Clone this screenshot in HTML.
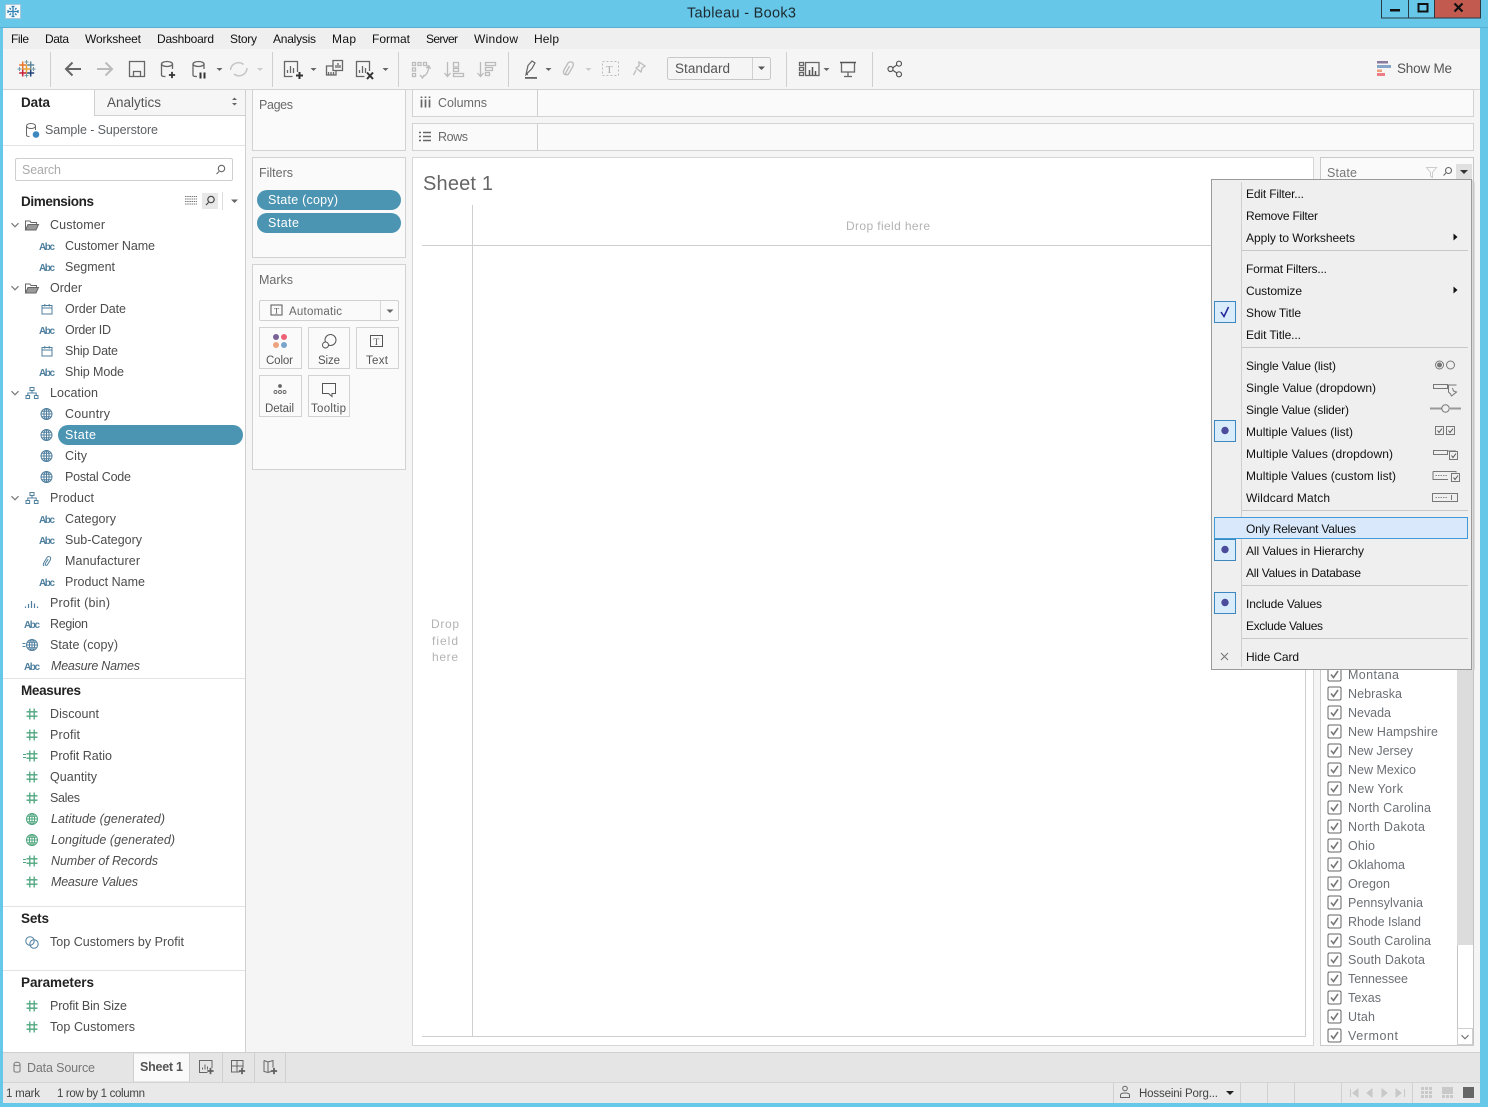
<!DOCTYPE html>
<html lang="en"><head><meta charset="utf-8"><title>Tableau - Book3</title>
<style>
html,body{margin:0;padding:0;width:1488px;height:1107px;overflow:hidden;background:#66c7e9}
svg{display:block}
text{font-family:"Liberation Sans",sans-serif;font-size:12.5px;fill:#4a4a4a;white-space:pre}
.m{font-size:12px;fill:#111}
.f{font-size:12.5px;fill:#4c4c4c}
.i{font-style:italic}
.h{font-weight:bold;font-size:13.5px;fill:#222}
.c{font-size:12.5px;fill:#6a6a6a}
.s{font-size:12.5px;fill:#6b7075}
.a{font-size:10px;fill:#4f7f9e;font-weight:bold}
.b{fill:#fafafa;stroke:#d2d2d2}
.w{fill:none;stroke:#666;stroke-width:1.3}
.lg{fill:none;stroke:#bbb;stroke-width:1.3}
.ln{stroke:#cfcfcf;stroke-width:1}
</style></head><body>
<svg width="1488" height="1107" viewBox="0 0 1488 1107" xmlns="http://www.w3.org/2000/svg">
<defs>
<symbol id="globe" viewBox="0 0 14 14" width="14" height="14"><g fill="none" stroke="currentColor" stroke-width="1"><circle cx="7" cy="7" r="5.5"/><ellipse cx="7" cy="7" rx="2.6" ry="5.5"/><path d="M7 1.5v11M1.5 7h11M2.3 4.3h9.4M2.3 9.7h9.4"/></g></symbol>
<symbol id="hash" viewBox="0 0 14 14" width="14" height="14"><path d="M4.8 1.500v11M9.200 1.500v11M1.500 4.800h11M1.500 9.200h11" fill="none" stroke="currentColor" stroke-width="1.300"/></symbol>
<symbol id="cal" viewBox="0 0 14 14" width="14" height="14"><path d="M2 3.500h10v8.500H2zM2 6h10M4.800 2v2.500M9.200 2v2.500" fill="none" stroke="#4f7f9e" stroke-width="1"/></symbol>
<symbol id="fold" viewBox="0 0 16 14" width="16" height="14"><path d="M1.500 12V3h4.500l1 1.500h5.500v2" fill="none" stroke="#666" stroke-width="1"/><path d="M1.500 12l2.500-5.500h10.500L12 12z" fill="#999" stroke="#666" stroke-width="1"/></symbol>
<symbol id="hier" viewBox="0 0 14 14" width="14" height="14"><path d="M5 1.500h4v3H5zM1 9.500h3.600v3H1zM9.400 9.500H13v3H9.400zM7 4.500v2.500M2.800 9.500V7h8.400v2.500" fill="none" stroke="#4f7f9e" stroke-width="1"/></symbol>
<symbol id="chev" viewBox="0 0 10 10" width="10" height="10"><path d="M1.500 3.200L5 6.800l3.500-3.600" fill="none" stroke="#777" stroke-width="1.200"/></symbol>
<symbol id="cb" viewBox="0 0 15 15" width="15" height="15"><rect x="1" y="1" width="13" height="13" rx="1.500" fill="#fff" stroke="#666"/><path d="M4 7.500l2.500 3L11 4" fill="none" stroke="#777" stroke-width="1.600"/></symbol>
<symbol id="dot" viewBox="0 0 24 24" width="24" height="24"><rect x="1.500" y="1.500" width="21" height="21" fill="#d9ecfb" stroke="#3f88bf"/><circle cx="12" cy="11.500" r="3.700" fill="#4c4c9c"/></symbol>
<symbol id="plus" viewBox="0 0 9 9" width="9" height="9"><path d="M4.500 1v7M1 4.500h7" stroke="#333" stroke-width="2" fill="none"/></symbol>
</defs>

<!-- window frame -->
<rect width="1488" height="1107" fill="#66c7e9"/>
<rect x="0" y="27" width="1488" height="1" fill="#5ab0d0"/>
<rect x="3" y="28" width="1477" height="1075" fill="#f5f5f5"/>
<rect x="5.500" y="4.500" width="15" height="14" fill="#f4f9fc" stroke="#a8c8d8"/>
<g fill="none" stroke="#2f7fb0" stroke-width="1.300"><path d="M13 6.500v10M8 11.500h10M9.500 8l1.500 1.500M16.500 8L15 9.500M9.500 15l1.500-1.500M16.500 15L15 13.500M8 8h0M11.500 6.500h3M11.500 16.500h3M8 10v3M18 10v3"/></g>
<text x="687" y="17.500" style="font-size:14.500px;fill:#1c2a30" textLength="109">Tableau - Book3</text>
<g>
<rect x="1381.500" y="-1" width="27" height="19" fill="#66c7e9" stroke="#2b3a42"/>
<rect x="1408.500" y="-1" width="26" height="19" fill="#66c7e9" stroke="#2b3a42"/>
<rect x="1434.500" y="-1" width="46" height="19" fill="#c25a50" stroke="#2b3a42"/>
<rect x="1390" y="9" width="10" height="2.500" fill="#111"/>
<rect x="1418.500" y="4" width="9" height="7.500" fill="none" stroke="#111" stroke-width="2"/>
<path d="M1454.500 3.500l8 8M1462.500 3.500l-8 8" stroke="#111" stroke-width="2.200"/>
</g>

<!-- menu -->
<rect x="3" y="28" width="1477" height="21" fill="#efefef"/>
<text class="m" x="11" y="43" textLength="18">File</text>
<text class="m" x="45" y="43" textLength="24">Data</text>
<text class="m" x="85" y="43" textLength="56">Worksheet</text>
<text class="m" x="157" y="43" textLength="57">Dashboard</text>
<text class="m" x="230" y="43" textLength="27">Story</text>
<text class="m" x="273" y="43" textLength="43">Analysis</text>
<text class="m" x="332" y="43" textLength="24">Map</text>
<text class="m" x="372" y="43" textLength="38">Format</text>
<text class="m" x="426" y="43" textLength="32">Server</text>
<text class="m" x="474" y="43" textLength="44">Window</text>
<text class="m" x="534" y="43" textLength="25">Help</text>

<!-- toolbar -->
<g class="ln"><path d="M50.500 52v35M272.500 52v35M398.500 52v35M508.500 52v35M786.500 52v35M872.500 52v35"/></g>
<g fill="none">
<path d="M26.500 64.500v9M22 69h9" stroke="#e8a33d" stroke-width="1.500"/>
<path d="M22.700 61.500v7M19.200 65h7" stroke="#e8762d" stroke-width="1.500"/>
<path d="M30.700 61.500v7M27.200 65h7" stroke="#5b879b" stroke-width="1.500"/>
<path d="M22.700 69.500v7M19.200 73h7" stroke="#c72037" stroke-width="1.500"/>
<path d="M30.700 69.500v7M27.200 73h7" stroke="#1f447a" stroke-width="1.500"/>
<path d="M26.500 60v4M24.500 62h4M26.500 73.500v4M24.500 75.500h4M19.500 67v4M17.500 69h4M33.500 67v4M31.500 69h4" stroke="#7099a6" stroke-width="1"/>
</g>
<path d="M81 69H66M72.500 62.500L66 69l6.500 6.500" fill="none" stroke="#666" stroke-width="2"/>
<path d="M97 69h15M105.500 62.500L112 69l-6.500 6.500" fill="none" stroke="#bbb" stroke-width="2"/>
<path class="w" d="M129.500 61.500h15v15h-15zM133.500 76.500v-5h7v5"/>
<g class="w"><ellipse cx="167" cy="64" rx="5.500" ry="2.500"/><path d="M161.500 64v11c0 1 1.500 1.500 3 1.500h1M172.500 64v5"/></g>
<use href="#plus" x="168" y="71" width="8" height="8"/>
<g class="w"><ellipse cx="198.500" cy="64" rx="5.500" ry="2.500"/><path d="M193 64v11c0 1 1.500 1.500 3 1.500h1M204 64v5"/></g>
<path d="M200.500 72.500v6M204.500 72.500v6" stroke="#333" stroke-width="2"/>
<path d="M216.500 68l3 3 3-3z" fill="#666"/>
<path d="M230.500 70a8 8 0 0 1 13-5.500M247 68a8 8 0 0 1-13 6" fill="none" stroke="#c5c5c5" stroke-width="1.500"/>
<path d="M257 68l3 3 3-3z" fill="#ccc"/>
<path class="w" d="M297.500 72v-10.500h-13v15h8M287.500 73v-3M290.500 73v-7M293.500 73v-5"/>
<use href="#plus" x="295" y="71" width="9" height="9"/>
<path d="M310.500 68l3 3 3-3z" fill="#666"/>
<path class="w" d="M333 66h-6.500v9h9.500v-4M328.500 75v-3M331 75v-3M333.500 75v-3M333 60.500h9.500v10H333zM336 68v-3M338 68v-5M340 68v-3"/>
<path class="w" d="M369.500 71v-9.500h-13v15h8M359.500 73v-3M362.500 73v-7M365.500 73v-5"/>
<path d="M367 72.500l6 6.500M373 72.500l-6 6.500" stroke="#333" stroke-width="2"/>
<path d="M382.500 68l3 3 3-3z" fill="#666"/>
<path class="lg" d="M412.500 62.500h3v3h-3zM418 62.500h3v3h-3zM423.500 62.500h3v3h-3zM412.500 68h3v3h-3zM412.500 73.500h3v3h-3zM428 65c1.500 5-1 10-5.500 12M420 75l2.500 3 1.500-3M426 68l3-2 1.500 3"/>
<path class="lg" d="M447.500 62v14M444.500 73l3 3.500 3-3.500M453.500 62.500h5v4.500h-5zM453.500 68.500h5v3h-5zM453.500 73.500h10v3h-10z"/>
<path class="lg" d="M480.500 62v14M477.500 73l3 3.500 3-3.500M485.500 62.500h10v3h-10zM485.500 67.500h7v3h-7zM485.500 72.500h4v3h-4z"/>
<path d="M526 74.500l2-9 4-4.500 3 2-3 5.500zM526 74.500h2" fill="none" stroke="#666" stroke-width="1.200"/>
<rect x="525" y="77" width="12" height="1.800" fill="#666"/>
<path d="M545.500 68l3 3 3-3z" fill="#666"/>
<path class="lg" d="M566 75c-3-1-3-3-2-5l4-7c1.500-2 4-1 5 0 1 2 0 3-1 5l-3.500 6c-1 1-2 1-2.500 0-.5-.5 0-2 .5-2.500l3-5.500"/>
<path d="M585.500 68l3 3 3-3z" fill="#ccc"/>
<rect x="602.500" y="61.500" width="16" height="14" fill="none" stroke="#bbb" stroke-dasharray="2 2"/>
<text x="606" y="73" style="font-size:11px;fill:#aaa;font-family:'Liberation Serif',serif">T</text>
<path class="lg" d="M639 62l6 4-3 2-1 4-5-4 3-2zM636 70l-2.500 5"/>
<rect x="667.500" y="57.500" width="103" height="22" rx="2" fill="#f5f5f5" stroke="#c8c8c8"/>
<path d="M752.500 58v21" stroke="#d0d0d0"/>
<text x="675" y="73" style="font-size:13.500px;fill:#555" textLength="55">Standard</text>
<path d="M758 66.500l3.500 3.500 3.500-3.500z" fill="#555"/>
<path class="w" d="M799.500 62.500h4v3h-4zM799.500 67.500h4v3h-4zM799.500 72.500h4v3h-4zM805.500 62.500h13.500v13h-13.500z" stroke-width="1"/>
<path d="M809.500 75v-5M812.500 75v-8M815.500 75v-4" stroke="#555" stroke-width="1.500"/>
<path d="M823.500 68l3 3 3-3z" fill="#666"/>
<path d="M840 62.500h16" stroke="#555" stroke-width="1.500"/><path class="w" d="M841.500 63v9h13v-9M848 72v4.500M844 76.500h8"/>
<g fill="none" stroke="#555" stroke-width="1.200"><circle cx="890.500" cy="69" r="2.500"/><circle cx="899" cy="63.700" r="2.500"/><circle cx="899" cy="74.300" r="2.500"/><path d="M892.700 67.700l4-2.600M892.700 70.300l4 2.600"/></g>
<g fill="none"><rect x="1377" y="61" width="11" height="2.500" fill="#8a7a9f"/><rect x="1377" y="65" width="14" height="3" fill="#85a6c8"/><rect x="1377" y="69.500" width="5" height="2.500" fill="#eaa07e"/><rect x="1377" y="73" width="8" height="3" fill="#ec7d85"/></g>
<text x="1397" y="73" style="font-size:13.500px;fill:#555" textLength="55">Show Me</text>

<!-- data pane -->
<rect x="3" y="89.500" width="242" height="963" fill="#fff"/>
<path d="M245.500 89v964" stroke="#d0d0d0"/>
<rect x="94.500" y="89.500" width="151" height="26" fill="#f6f6f6" stroke="#d0d0d0"/>
<rect x="3" y="89" width="1477" height="1" fill="#d6d6d6"/>
<text x="21" y="107" style="font-size:13.500px;font-weight:bold;fill:#222" textLength="29">Data</text>
<text x="107" y="107" style="font-size:13.500px;fill:#555" textLength="54">Analytics</text>
<path d="M232 100l2.500-2.500 2.500 2.500zM232 103l2.500 2.500 2.500-2.500z" fill="#666"/>
<g class="w" style="stroke-width:1"><ellipse cx="31" cy="126" rx="4.500" ry="2.500"/><path d="M26.500 126v9c0 1 1 1.500 3 1.500M35.500 126v4"/></g>
<circle cx="36" cy="134.500" r="3.300" fill="#3f88bf"/>
<text x="45" y="134" class="s" style="font-size:12.500px;fill:#5d6266" textLength="113">Sample - Superstore</text>
<path d="M3 145.500h242" stroke="#e3e3e3"/>
<rect x="15.500" y="158.500" width="217" height="22" rx="1.500" fill="#fff" stroke="#cfcfcf"/>
<text x="22" y="174" style="font-size:12.500px;fill:#aaa" textLength="39">Search</text>
<g class="w" style="stroke-width:1.100"><circle cx="221.500" cy="168.500" r="3.200"/><path d="M219 171.500l-2.500 2.500"/></g>
<text class="h" x="21" y="206" textLength="73">Dimensions</text>
<path d="M185 196.500h12M185 199h12M185 201.500h12M185 204h12" stroke="#777" stroke-dasharray="1.500 .7"/>
<rect x="202" y="193" width="16" height="16" fill="#e8e8e8"/>
<g fill="none" stroke="#444" stroke-width="1.200"><circle cx="211" cy="199.500" r="3.200"/><path d="M208.500 202.500l-2.500 2.500"/></g>
<path d="M222.500 192v18" stroke="#ddd"/>
<path d="M231 199.500h7l-3.500 3.500z" fill="#666"/>

<!-- dimensions -->
<use href="#chev" x="10" y="220"/><use href="#fold" x="24" y="218"/><text class="f" x="50" y="229" textLength="55">Customer</text>
<text class="a" x="39" y="250" textLength="16">Abc</text><text class="f" x="65" y="250" textLength="90">Customer Name</text>
<text class="a" x="39" y="271" textLength="16">Abc</text><text class="f" x="65" y="271" textLength="50">Segment</text>
<use href="#chev" x="10" y="283"/><use href="#fold" x="24" y="281"/><text class="f" x="50" y="292" textLength="32">Order</text>
<use href="#cal" x="40" y="302"/><text class="f" x="65" y="313" textLength="61">Order Date</text>
<text class="a" x="39" y="334" textLength="16">Abc</text><text class="f" x="65" y="334" textLength="46">Order ID</text>
<use href="#cal" x="40" y="344"/><text class="f" x="65" y="355" textLength="53">Ship Date</text>
<text class="a" x="39" y="376" textLength="16">Abc</text><text class="f" x="65" y="376" textLength="59">Ship Mode</text>
<use href="#chev" x="10" y="388"/><use href="#hier" x="25" y="386"/><text class="f" x="50" y="397" textLength="48">Location</text>
<use href="#globe" x="39.500" y="407" style="color:#4f7f9e"/><text class="f" x="65" y="418" textLength="45">Country</text>
<rect x="58" y="425" width="185" height="20" rx="10" fill="#4b94b2"/>
<use href="#globe" x="39.500" y="428" style="color:#4f7f9e"/><text class="f" x="65" y="439" style="fill:#fff" textLength="31">State</text>
<use href="#globe" x="39.500" y="449" style="color:#4f7f9e"/><text class="f" x="65" y="460" textLength="22">City</text>
<use href="#globe" x="39.500" y="470" style="color:#4f7f9e"/><text class="f" x="65" y="481" textLength="66">Postal Code</text>
<use href="#chev" x="10" y="493"/><use href="#hier" x="25" y="491"/><text class="f" x="50" y="502" textLength="44">Product</text>
<text class="a" x="39" y="523" textLength="16">Abc</text><text class="f" x="65" y="523" textLength="51">Category</text>
<text class="a" x="39" y="544" textLength="16">Abc</text><text class="f" x="65" y="544" textLength="77">Sub-Category</text>
<path d="M44 566c-1-1-1-2 0-3.500l3-5c1-1.500 3-1 3.500 0s0 2-.5 3l-2.500 4c-.5 1-1.500 1-2 .5s-.2-1.500.2-2l2.500-3.800" fill="none" stroke="#4f7f9e"/>
<text class="f" x="65" y="565" textLength="75">Manufacturer</text>
<text class="a" x="39" y="586" textLength="16">Abc</text><text class="f" x="65" y="586" textLength="80">Product Name</text>
<path d="M25.500 608v-1.500M28.500 608v-4M31.500 608v-7M34.500 608v-4.500M37.500 608v-1.500" stroke="#4f7f9e" stroke-width="1.200"/><text class="f" x="50" y="607" textLength="60">Profit (bin)</text>
<text class="a" x="24" y="628" textLength="16">Abc</text><text class="f" x="50" y="628" textLength="38">Region</text>
<path d="M22.500 643.500h3M22.500 646.500h3" stroke="#4f7f9e"/><use href="#globe" x="25" y="638" style="color:#4f7f9e"/><text class="f" x="50" y="649" textLength="68">State (copy)</text>
<text class="a" x="24" y="670" textLength="16">Abc</text><text class="f i" x="51" y="670" textLength="89">Measure Names</text>
<path d="M3 678.500h242" stroke="#e3e3e3"/>

<!-- measures -->
<text class="h" x="21" y="695" textLength="60">Measures</text>
<use href="#hash" x="25" y="707" style="color:#4fa67f"/><text class="f" x="50" y="718" textLength="49">Discount</text>
<use href="#hash" x="25" y="728" style="color:#4fa67f"/><text class="f" x="50" y="739" textLength="30">Profit</text>
<path d="M23 754.500h3M23 757.500h3" stroke="#4fa67f"/><use href="#hash" x="25" y="749" style="color:#4fa67f"/><text class="f" x="50" y="760" textLength="62">Profit Ratio</text>
<use href="#hash" x="25" y="770" style="color:#4fa67f"/><text class="f" x="50" y="781" textLength="47">Quantity</text>
<use href="#hash" x="25" y="791" style="color:#4fa67f"/><text class="f" x="50" y="802" textLength="30">Sales</text>
<use href="#globe" x="25" y="812" style="color:#4fa67f"/><text class="f i" x="51" y="823" textLength="114">Latitude (generated)</text>
<use href="#globe" x="25" y="833" style="color:#4fa67f"/><text class="f i" x="51" y="844" textLength="124">Longitude (generated)</text>
<path d="M23 859.500h3M23 862.500h3" stroke="#4fa67f"/><use href="#hash" x="25" y="854" style="color:#4fa67f"/><text class="f i" x="51" y="865" textLength="107">Number of Records</text>
<use href="#hash" x="25" y="875" style="color:#4fa67f"/><text class="f i" x="51" y="886" textLength="87">Measure Values</text>
<path d="M3 906.500h242" stroke="#e3e3e3"/>
<text class="h" x="21" y="923" textLength="28">Sets</text>
<g fill="none" stroke="#4f7f9e"><circle cx="30" cy="941" r="4.200"/><circle cx="34" cy="944" r="4.200"/></g>
<text class="f" x="50" y="946" textLength="134">Top Customers by Profit</text>
<path d="M3 970.500h242" stroke="#e3e3e3"/>
<text class="h" x="21" y="987" textLength="73">Parameters</text>
<use href="#hash" x="25" y="999" style="color:#4fa67f"/><text class="f" x="50" y="1010" textLength="77">Profit Bin Size</text>
<use href="#hash" x="25" y="1020" style="color:#4fa67f"/><text class="f" x="50" y="1031" textLength="85">Top Customers</text>

<!-- shelves cards -->
<rect class="b" x="252.500" y="89.500" width="153" height="61"/>
<text class="c" x="259" y="109" textLength="34">Pages</text>
<rect class="b" x="252.500" y="157.500" width="153" height="100"/>
<text class="c" x="259" y="177" textLength="34">Filters</text>
<rect x="257" y="190" width="144" height="20" rx="10" fill="#4b94b2"/>
<text x="268" y="204" style="fill:#fff" textLength="70">State (copy)</text>
<rect x="257" y="213" width="144" height="20" rx="10" fill="#4b94b2"/>
<text x="268" y="227" style="fill:#fff" textLength="31">State</text>
<rect class="b" x="252.500" y="264.500" width="153" height="205"/>
<text class="c" x="259" y="284" textLength="34">Marks</text>
<rect x="259.500" y="300.500" width="139" height="20" rx="1.500" fill="#fafafa" stroke="#d0d0d0"/>
<path d="M380.500 301v19" stroke="#d8d8d8"/>
<rect x="271" y="305" width="11" height="10" fill="none" stroke="#555"/>
<text x="274" y="313.500" style="font-size:8.500px;fill:#555;font-family:'Liberation Serif',serif">T</text>
<text x="289" y="315" style="font-size:11.500px;fill:#666" textLength="53">Automatic</text>
<path d="M386.500 309.500h7l-3.500 3.500z" fill="#666"/>
<g fill="#fafafa" stroke="#d2d2d2"><rect x="259.500" y="327.500" width="42" height="41"/><rect x="308.500" y="327.500" width="41" height="41"/><rect x="356.500" y="327.500" width="42" height="41"/><rect x="259.500" y="375.500" width="42" height="41"/><rect x="308.500" y="375.500" width="41" height="41"/></g>
<circle cx="276" cy="337" r="3" fill="#7a6296"/><circle cx="284" cy="337" r="3" fill="#ee6277"/><circle cx="276" cy="345" r="3" fill="#eda47e"/><circle cx="284" cy="345" r="3" fill="#7aa4cc"/>
<text x="266" y="364" style="font-size:11.500px;fill:#555" textLength="27">Color</text>
<g fill="none" stroke="#555"><circle cx="330.500" cy="340" r="5.500"/><circle cx="325.500" cy="345" r="3" fill="#fafafa"/></g>
<text x="318" y="364" style="font-size:11.500px;fill:#555" textLength="22">Size</text>
<rect x="370.500" y="335.500" width="12" height="11" fill="none" stroke="#555"/>
<text x="373.500" y="345" style="font-size:9.500px;fill:#555;font-family:'Liberation Serif',serif">T</text>
<text x="366" y="364" style="font-size:11.500px;fill:#555" textLength="22">Text</text>
<circle cx="280" cy="386" r="1.900" fill="#666"/><g fill="none" stroke="#666" stroke-width=".9"><circle cx="275.500" cy="392" r="1.500"/><circle cx="280" cy="392" r="1.500"/><circle cx="284.500" cy="392" r="1.500"/></g>
<text x="265" y="412" style="font-size:11.500px;fill:#555" textLength="29">Detail</text>
<path d="M322.500 383.500h13v10h-3.500v3l-3.500-3h-6z" fill="none" stroke="#555"/>
<text x="311" y="412" style="font-size:11.500px;fill:#555" textLength="35">Tooltip</text>

<rect class="b" x="412.500" y="89.500" width="1061" height="27"/>
<path class="ln" d="M537.500 90v26"/>
<path d="M421.500 99.500v8M425.500 99.500v8M429.500 99.500v8M421.500 96.500v1.500M425.500 96.500v1.500M429.500 96.500v1.500" stroke="#666" stroke-width="1.700"/>
<text class="c" x="438" y="107" textLength="49">Columns</text>
<rect class="b" x="412.500" y="123.500" width="1061" height="27"/>
<path class="ln" d="M537.500 124v26"/>
<path d="M419 132.500h2M423 132.500h8M419 136.500h2M423 136.500h8M419 140.500h2M423 140.500h8" stroke="#666" stroke-width="1.500"/>
<text class="c" x="438" y="141" textLength="30">Rows</text>

<!-- view -->
<rect x="412.500" y="157.500" width="901" height="888" fill="#fff" stroke="#d6d6d6"/>
<text x="423" y="190" style="font-size:20px;fill:#666" textLength="70">Sheet 1</text>
<path d="M472.500 205v831M422 245.500h883M422 1036.500h883.500M1305.500 245v792" stroke="#cfcfcf"/>
<text x="846" y="230" style="font-size:12px;fill:#b3b3b3" textLength="84">Drop field here</text>
<text x="431" y="628" style="font-size:12px;fill:#b3b3b3" textLength="28">Drop</text>
<text x="432" y="645" style="font-size:12px;fill:#b3b3b3" textLength="26">field</text>
<text x="432" y="661" style="font-size:12px;fill:#b3b3b3" textLength="26">here</text>

<!-- filter card -->
<rect x="1320.500" y="157.500" width="153" height="888" fill="#fff" stroke="#cacaca"/>
<rect x="1321" y="158" width="152" height="22" fill="#fafafa"/>
<text x="1327" y="177" style="font-size:12.500px;fill:#777" textLength="30">State</text>
<path d="M1426.500 167.500h10l-4 5v5l-2-1.500v-3.500z" fill="none" stroke="#ccc"/>
<g fill="none" stroke="#666" stroke-width="1.100"><circle cx="1448.500" cy="170.500" r="3"/><path d="M1446 173l-2.500 2.500"/></g>
<rect x="1456" y="164" width="16" height="16" fill="#e0e0e0"/>
<path d="M1460 170h8l-4 4z" fill="#333"/>
<rect x="1457" y="180" width="16" height="765" fill="#dcdcdc"/>
<rect x="1457.500" y="1028.500" width="15" height="16" fill="#fff" stroke="#cfcfcf"/>
<use href="#chev" x="1460" y="1032"/>
<path d="M1473.500 158v887M1457.500 945v84" stroke="#c4c4c4"/>
<g>
<use href="#cb" x="1327" y="667"/><text class="s" x="1348" y="679" textLength="51">Montana</text>
<use href="#cb" x="1327" y="686"/><text class="s" x="1348" y="698" textLength="54">Nebraska</text>
<use href="#cb" x="1327" y="705"/><text class="s" x="1348" y="717" textLength="43">Nevada</text>
<use href="#cb" x="1327" y="724"/><text class="s" x="1348" y="736" textLength="90">New Hampshire</text>
<use href="#cb" x="1327" y="743"/><text class="s" x="1348" y="755" textLength="65">New Jersey</text>
<use href="#cb" x="1327" y="762"/><text class="s" x="1348" y="774" textLength="68">New Mexico</text>
<use href="#cb" x="1327" y="781"/><text class="s" x="1348" y="793" textLength="55">New York</text>
<use href="#cb" x="1327" y="800"/><text class="s" x="1348" y="812" textLength="83">North Carolina</text>
<use href="#cb" x="1327" y="819"/><text class="s" x="1348" y="831" textLength="77">North Dakota</text>
<use href="#cb" x="1327" y="838"/><text class="s" x="1348" y="850" textLength="27">Ohio</text>
<use href="#cb" x="1327" y="857"/><text class="s" x="1348" y="869" textLength="57">Oklahoma</text>
<use href="#cb" x="1327" y="876"/><text class="s" x="1348" y="888" textLength="42">Oregon</text>
<use href="#cb" x="1327" y="895"/><text class="s" x="1348" y="907" textLength="75">Pennsylvania</text>
<use href="#cb" x="1327" y="914"/><text class="s" x="1348" y="926" textLength="73">Rhode Island</text>
<use href="#cb" x="1327" y="933"/><text class="s" x="1348" y="945" textLength="83">South Carolina</text>
<use href="#cb" x="1327" y="952"/><text class="s" x="1348" y="964" textLength="77">South Dakota</text>
<use href="#cb" x="1327" y="971"/><text class="s" x="1348" y="983" textLength="60">Tennessee</text>
<use href="#cb" x="1327" y="990"/><text class="s" x="1348" y="1002" textLength="33">Texas</text>
<use href="#cb" x="1327" y="1009"/><text class="s" x="1348" y="1021" textLength="27">Utah</text>
<use href="#cb" x="1327" y="1028"/><text class="s" x="1348" y="1040" textLength="50">Vermont</text>
</g>

<!-- context menu -->
<rect x="1473" y="182" width="2" height="488" fill="#c8c8c8" opacity=".6"/>
<rect x="1211.500" y="179.500" width="260" height="490" fill="#efefef" stroke="#9a9a9a"/>
<path d="M1241.500 182v485" stroke="#cfcfcf"/>
<path d="M1242 250.500h226M1242 347.500h226M1242 510.500h226M1242 585.500h226M1242 638.500h226" stroke="#c8c8c8"/>
<rect x="1214.500" y="517.500" width="253" height="21" fill="#d9e9fb" stroke="#3f9ad6"/>
<rect x="1214.500" y="301.500" width="21" height="21" fill="#d9ecfb" stroke="#3f88bf"/>
<path d="M1221 312l3 4.500 4.500-9.500" fill="none" stroke="#22229a" stroke-width="1.500"/>
<use href="#dot" x="1213" y="419"/><use href="#dot" x="1213" y="538"/><use href="#dot" x="1213" y="591"/>
<text class="m" x="1246" y="198" textLength="58">Edit Filter...</text>
<text class="m" x="1246" y="220" textLength="72">Remove Filter</text>
<text class="m" x="1246" y="242" textLength="109">Apply to Worksheets</text>
<path d="M1453.500 233.500l4 3.500-4 3.500z" fill="#111"/>
<text class="m" x="1246" y="273" textLength="81">Format Filters...</text>
<text class="m" x="1246" y="295" textLength="56">Customize</text>
<path d="M1453.500 286.500l4 3.500-4 3.500z" fill="#111"/>
<text class="m" x="1246" y="317" textLength="55">Show Title</text>
<text class="m" x="1246" y="339" textLength="55">Edit Title...</text>
<text class="m" x="1246" y="370" textLength="90">Single Value (list)</text>
<text class="m" x="1246" y="392" textLength="130">Single Value (dropdown)</text>
<text class="m" x="1246" y="414" textLength="103">Single Value (slider)</text>
<text class="m" x="1246" y="436" textLength="107">Multiple Values (list)</text>
<text class="m" x="1246" y="458" textLength="147">Multiple Values (dropdown)</text>
<text class="m" x="1246" y="480" textLength="150">Multiple Values (custom list)</text>
<text class="m" x="1246" y="502" textLength="84">Wildcard Match</text>
<text class="m" x="1246" y="533" textLength="110">Only Relevant Values</text>
<text class="m" x="1246" y="555" textLength="118">All Values in Hierarchy</text>
<text class="m" x="1246" y="577" textLength="115">All Values in Database</text>
<text class="m" x="1246" y="608" textLength="76">Include Values</text>
<text class="m" x="1246" y="630" textLength="77">Exclude Values</text>
<text class="m" x="1246" y="661" textLength="53">Hide Card</text>
<path d="M1221 653l7 7M1228 653l-7 7" stroke="#777" stroke-width="1.100"/>
<g fill="none" stroke="#777">
<circle cx="1439.500" cy="365" r="4"/><circle cx="1439.500" cy="365" r="2" fill="#777"/><circle cx="1450.500" cy="365" r="4"/>
<path d="M1433.500 384.500h14v4h-14zM1447.500 385h9M1448.500 385v7l2 2 1 2 5-4-3-1-1-3"/>
<path d="M1430 408.500h12M1450 408.500h11" stroke="#999" stroke-width="2"/><circle cx="1445.500" cy="408.500" r="3.700"/>
<rect x="1435.500" y="426.500" width="8" height="8"/><rect x="1446.500" y="426.500" width="8" height="8"/>
<path d="M1437.500 430.500l1.500 2 3-4M1448.500 430.500l1.500 2 3-4" stroke="#555"/>
<path d="M1433.500 450.500h14v4h-14zM1447 451h9"/><rect x="1449.500" y="451.500" width="8" height="8"/><path d="M1451.500 455.500l1.500 2 3-4" stroke="#555"/>
<path d="M1433 471.500h23v1M1433 471.500v8h15"/><rect x="1451.500" y="473.500" width="8" height="8"/><path d="M1453.500 477.500l1.500 2 3-4" stroke="#555"/>
<path d="M1435.500 475.500h12" stroke-dasharray="1.500 1" stroke="#888"/>
<rect x="1432.500" y="493.500" width="25" height="8"/><path d="M1435.500 497.500h12" stroke-dasharray="1.500 1" stroke="#888"/><path d="M1451.500 495v5"/>
</g>

<!-- sheet tabs -->
<rect x="3" y="1052" width="1477" height="30" fill="#e5e5e5"/>
<path d="M3 1052.500h1477" stroke="#cfcfcf"/>
<rect x="133.500" y="1053" width="56" height="29" fill="#fafafa" stroke="#d0d0d0"/>
<path d="M222.500 1053v29M254.500 1053v29M285.500 1053v29" stroke="#cfcfcf"/>
<g fill="none" stroke="#777"><ellipse cx="17" cy="1064" rx="3" ry="1.700"/><path d="M14 1064v7c0 1.500 6 1.500 6 0v-7"/></g>
<text x="27" y="1072" style="font-size:12.500px;fill:#777" textLength="68">Data Source</text>
<text x="140" y="1071" style="font-size:12.500px;font-weight:bold;fill:#555" textLength="43">Sheet 1</text>
<path d="M212 1068v-7.500h-12.500v12h8M202.500 1069.500v-2M205 1069.500v-5M207.500 1069.500v-3" fill="none" stroke="#666"/>
<use href="#plus" x="206.500" y="1067" width="8" height="8" opacity=".75"/>
<path d="M243 1068v-7.500h-11.500v11.500h8M231.500 1066h11.500M237 1060.500v11.500" fill="none" stroke="#666"/>
<use href="#plus" x="238" y="1067" width="8" height="8" opacity=".75"/>
<path d="M264 1060.500l4 1.500 5-1.500v7M264 1060.500v11l4 1 3-1M268 1062v10.500" fill="none" stroke="#666"/>
<use href="#plus" x="270" y="1067" width="8" height="8" opacity=".75"/>

<!-- status -->
<rect x="3" y="1082" width="1477" height="21" fill="#e9e9e9"/>
<path d="M3 1082.500h1477" stroke="#d4d4d4"/>
<text x="6" y="1097" style="font-size:11.500px;fill:#444" textLength="34">1 mark</text>
<text x="57" y="1097" style="font-size:11.500px;fill:#444" textLength="88">1 row by 1 column</text>
<path d="M1113.500 1083v20M1240.500 1083v20M1267.500 1083v20M1294.500 1083v20M1341.500 1083v20M1412.500 1083v20" stroke="#d0d0d0"/>
<g fill="none" stroke="#666"><circle cx="1125" cy="1088.500" r="2.300"/><path d="M1120.500 1097.500v-2.500c0-1.500 2-2 4.500-2s4.500.5 4.500 2v2.500z"/></g>
<text x="1139" y="1097" style="font-size:11.500px;fill:#444" textLength="79">Hosseini Porg...</text>
<path d="M1226 1091h8l-4 4z" fill="#222"/>
<path d="M1350.500 1089v8M1358 1089v8l-5-4zM1372 1089v8l-5-4zM1382 1089v8l5-4zM1396 1089v8l5-4zM1404.500 1089v8" fill="#c8c8c8" stroke="#c8c8c8"/>
<g fill="#c9c9c9"><rect x="1421" y="1087" width="3" height="3"/><rect x="1425" y="1087" width="3" height="3"/><rect x="1429" y="1087" width="3" height="3"/><rect x="1421" y="1091" width="3" height="3"/><rect x="1425" y="1091" width="3" height="3"/><rect x="1429" y="1091" width="3" height="3"/><rect x="1421" y="1095" width="3" height="3"/><rect x="1425" y="1095" width="3" height="3"/><rect x="1429" y="1095" width="3" height="3"/>
<rect x="1442" y="1087" width="11" height="7"/><rect x="1442" y="1095" width="3" height="3"/><rect x="1446" y="1095" width="3" height="3"/><rect x="1450" y="1095" width="3" height="3"/></g>
<rect x="1463" y="1087" width="11" height="11" fill="#666"/>
</svg>
</body></html>
